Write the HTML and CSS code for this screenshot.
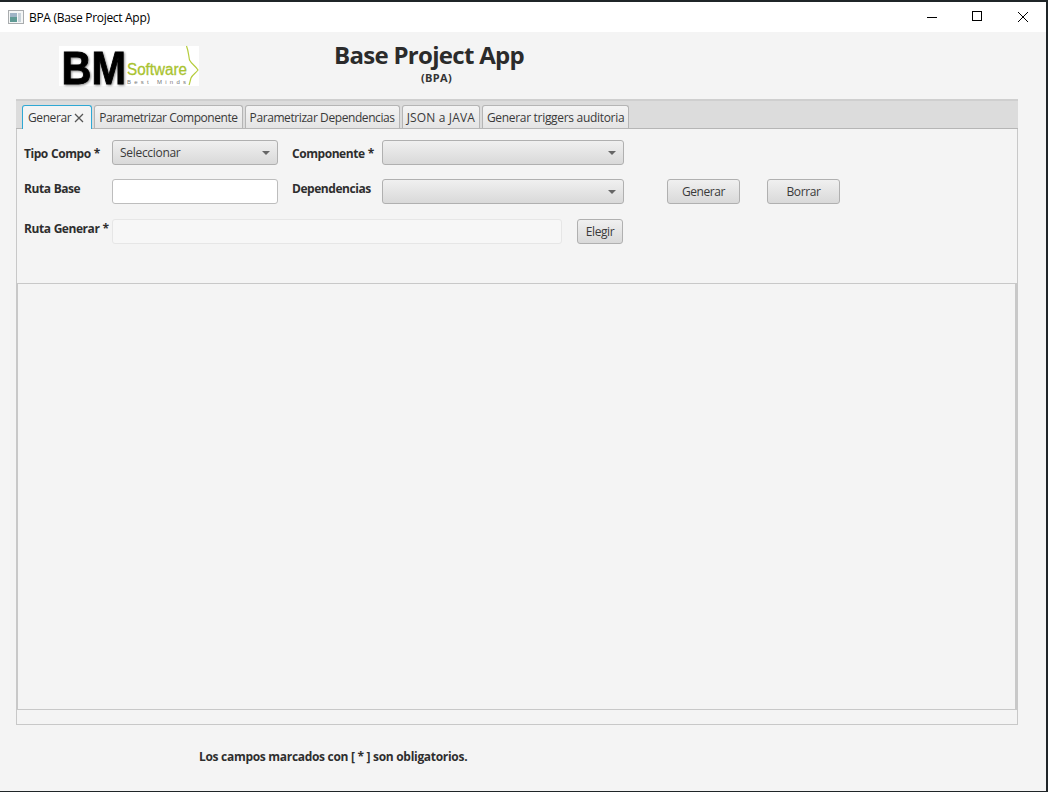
FILE: index.html
```html
<!DOCTYPE html>
<html>
<head>
	<title>BPA (Base Project App)</title>
	<meta charset="utf-8">
	<link rel="stylesheet" href="styles.css">
</head>
<body>
<div class="window">
	<div class="titlebar">
		<svg class="app-icon" width="16" height="14" viewBox="0 0 16 14">
			<rect x="0.5" y="0.5" width="15" height="13" fill="#f4f6f6" stroke="#a9acae"/>
			<rect x="2" y="3" width="7" height="9" fill="#5f9a94"/>
			<rect x="2" y="3" width="7" height="4" fill="#9fb4c6"/>
			<rect x="10" y="3" width="3" height="9" fill="#c9d3da"/>
		</svg>
		<span class="titlebar-text">BPA (Base Project App)</span>
		<div class="win-buttons">
			<svg width="46" height="30" viewBox="0 0 46 30"><path d="M19 15.5h10" stroke="#000" fill="none"/></svg>
			<svg width="46" height="30" viewBox="0 0 46 30"><rect x="18.5" y="9.5" width="9" height="9" stroke="#000" fill="none"/></svg>
			<svg width="46" height="30" viewBox="0 0 46 30"><path d="M18 10l10 10M28 10l-10 10" stroke="#000" fill="none"/></svg>
		</div>
	</div>

	<div class="header">
		<svg class="logo" width="140" height="40" viewBox="0 0 140 40">
			<rect width="140" height="40" fill="#fff"/>
			<g transform="translate(2.5 37.5) scale(.9 1)"><text class="logo-bm">BM</text></g>
			<text class="logo-soft" x="68" y="29" textLength="60" lengthAdjust="spacingAndGlyphs">Software</text>
			<text class="logo-best" x="68" y="38" textLength="59">Best Minds</text>
			<path d="M127.500 0c2 5 2 9 3 14 2 4 6 6 8.500 10-2 3-6 5-7 8-1 3-1 5-2 7" stroke="#b5cc3c" stroke-width="1.2" fill="none"/>
		</svg>
		<div class="heading">
			<h1>Base Project App</h1>
			<div class="subheading">(BPA)</div>
		</div>
	</div>

	<div class="tabpane">
		<div class="tabs">
			<div class="tab tab-active">Generar
				<svg class="tab-close" width="10" height="10" viewBox="0 0 10 10"><path d="M1 1l8 8M9 1l-8 8" stroke="#555" stroke-width="1.3" fill="none"/></svg>
			</div>
			<div class="tab tab-tight">Parametrizar Componente</div>
			<div class="tab">Parametrizar Dependencias</div>
			<div class="tab tab-json">JSON a JAVA</div>
			<div class="tab tab-triggers">Generar triggers auditoria</div>
		</div>
		<div class="tab-content">
			<div class="form">
				<div class="row">
					<label class="field-label lowered">Tipo Compo *</label>
					<div class="combo combo-short">Seleccionar<span class="arrow"></span></div>
					<label class="field-label field-label-2 lowered">Componente *</label>
					<div class="combo combo-long"><span class="arrow"></span></div>
				</div>
				<div class="row">
					<label class="field-label raised">Ruta Base</label>
					<div class="textfield"></div>
					<label class="field-label field-label-2 raised">Dependencias</label>
					<div class="combo combo-long"><span class="arrow"></span></div>
					<div class="btn btn-generar">Generar</div>
					<div class="btn btn-borrar">Borrar</div>
				</div>
				<div class="row row-last">
					<label class="field-label raised">Ruta Generar *</label>
					<div class="textfield textfield-off"></div>
					<div class="btn btn-elegir">Elegir</div>
				</div>
			</div>
			<div class="output"></div>
			<div class="scroll-strip"></div>
		</div>
	</div>

	<div class="footnote">Los campos marcados con [ * ] son obligatorios.</div>
</div>
</body>
</html>
```

FILE: styles.css
```css
*{
	margin: 0;
	padding: 0;
	box-sizing: border-box;
}
html,body{
	height: 100%;
}
body{
	background: #1f2528;
	overflow: hidden;
	padding: 2px 2px 1px 0;
	font-family: "Open Sans", "Liberation Sans", sans-serif;
	font-size: 12px;
	color: #333;
}
.window{
	height: 789px;
	background: #f4f4f4;
	display: flex;
	flex-direction: column;
}

/* barra de titulo */
.titlebar{
	height: 30px;
	background: #fff;
	display: flex;
	align-items: center;
	padding-left: 8px;
	flex: none;
}
.app-icon{
	margin-right: 5px;
}
.titlebar-text{
	color: #000;
	letter-spacing: -0.3px;
}
.win-buttons{
	margin-left: auto;
	display: flex;
}
.win-buttons svg{
	display: block;
}

/* cabecera */
.header{
	height: 67px;
	display: flex;
	flex: none;
	padding: 13px 0 0 59px;
}
.logo{
	display: block;
	flex: none;
	margin-top: 1px;
	overflow: visible;
}
.heading{
	width: 190px;
	margin-left: 135px;
	text-align: center;
}
h1{
	font-size: 24px;
	line-height: 20px;
	font-weight: 700;
	color: #2b2b2b;
	white-space: nowrap;
	letter-spacing: -0.7px;
}
.subheading{
	font-size: 11px;
	font-weight: 700;
	line-height: 14px;
	margin-top: 6px;
	padding-left: 15px;
	letter-spacing: 0.3px;
}
.logo-bm{
	font-family: "Liberation Sans", sans-serif;
	font-weight: 700;
	font-size: 46px;
	fill: #000;
	stroke: #000;
	stroke-width: 0.9;
	filter: drop-shadow(1.5px 1px 1px #888);
}
.logo-soft{
	font-family: "Liberation Sans", sans-serif;
	font-size: 16px;
	fill: #a9c32f;
	stroke: #a9c32f;
	stroke-width: 0.3;
}
.logo-best{
	font-family: "Liberation Sans", sans-serif;
	font-size: 6px;
	fill: #777;
}

/* pestañas */
.tabpane{
	margin: 0 28px 0 16px;
	height: 626px;
	flex: none;
	border: 1px solid #c8c8c8;
	border-top: 0;
	display: flex;
	flex-direction: column;
}
.tabs{
	height: 30px;
	flex: none;
	background: #dcdcdc;
	border-top: 2px solid #cfcfcf;
	border-bottom: 1px solid #b6b6b6;
	display: flex;
	gap: 2px;
	padding: 4px 0 0 6px;
	margin: 0 -1px;
}
.tab{
	height: 23px;
	background: linear-gradient(#f4f4f4, #e4e4e4);
	border: 1px solid #b5b5b5;
	border-bottom: 0;
	border-radius: 3px 3px 0 0;
	padding: 0 4px;
	line-height: 23px;
	white-space: nowrap;
	letter-spacing: -0.41px;
	color: #3a3a3a;
}
.tab-tight{
	letter-spacing: -0.45px;
}
.tab-json{
	letter-spacing: 0.15px;
}
.tab-triggers{
	letter-spacing: -0.31px;
}
.tab-active{
	background: #f4f4f4;
	border: 1px solid #2fa8d4;
	border-bottom: 0;
	height: 24px;
	display: flex;
	align-items: center;
	gap: 3px;
	padding: 0 7px 0 5px;
}
.tab-content{
	flex: 1;
	display: flex;
	flex-direction: column;
}
.form{
	height: 154px;
	flex: none;
	padding: 11px 0 0 7px;
	display: flex;
	flex-direction: column;
	gap: 14px;
}
.row{
	display: flex;
	align-items: center;
	height: 25px;
}
.row-last{
	margin-top: 1px;
}
.field-label{
	width: 88px;
	flex: none;
	font-weight: 700;
	letter-spacing: -0.45px;
	word-spacing: 0.5px;
	white-space: nowrap;
	color: #2e2e2e;
}
.raised{
	margin-bottom: 7px;
}
.lowered{
	margin-top: 1px;
}
.field-label-2{
	width: 90px;
	margin-left: 14px;
}

/* controles */
.combo,.btn{
	height: 25px;
	background: linear-gradient(#f0f0f0, #d9d9d9);
	border: 1px solid #b0b0b0;
	border-radius: 3px;
	flex: none;
}
.combo{
	position: relative;
	padding-left: 7px;
	line-height: 23px;
	color: #3a3a3a;
	letter-spacing: -0.3px;
}
.combo-short{
	width: 166px;
}
.combo-long{
	width: 242px;
}
.arrow{
	position: absolute;
	right: 7px;
	top: 10px;
	width: 0;
	height: 0;
	border-left: 4px solid transparent;
	border-right: 4px solid transparent;
	border-top: 4px solid #666;
}
.textfield{
	width: 166px;
	height: 25px;
	flex: none;
	background: #fff;
	border: 1px solid #bdbdbd;
	border-radius: 3px;
}
.textfield-off{
	width: 450px;
	background: #f7f7f7;
	border-color: #e6e6e6;
}
.btn{
	text-align: center;
	line-height: 23px;
	width: 73px;
	color: #3a3a3a;
	letter-spacing: -0.4px;
}
.btn-generar{
	margin-left: 43px;
}
.btn-borrar{
	margin-left: 27px;
}
.btn-elegir{
	width: 46px;
	margin-left: 15px;
}
.output{
	flex: 1;
	border: 1px solid #c8c8c8;
	border-right-width: 2px;
}
.scroll-strip{
	height: 14px;
	flex: none;
}
.footnote{
	margin: 23px 0 0 199px;
	font-weight: 700;
	letter-spacing: -0.3px;
	color: #2e2e2e;
}
```
